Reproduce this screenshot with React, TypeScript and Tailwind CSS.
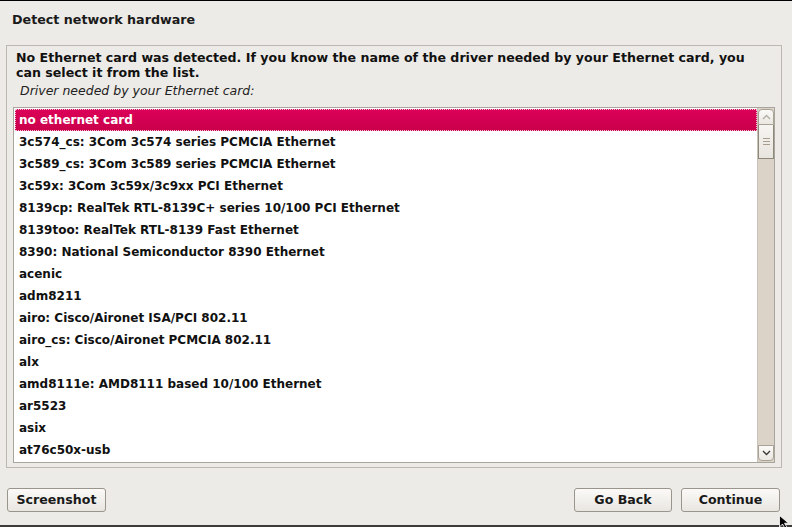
const FONT = '"DejaVu Sans", "Liberation Sans", sans-serif'

const drivers = [
  'no ethernet card',
  '3c574_cs: 3Com 3c574 series PCMCIA Ethernet',
  '3c589_cs: 3Com 3c589 series PCMCIA Ethernet',
  '3c59x: 3Com 3c59x/3c9xx PCI Ethernet',
  '8139cp: RealTek RTL-8139C+ series 10/100 PCI Ethernet',
  '8139too: RealTek RTL-8139 Fast Ethernet',
  '8390: National Semiconductor 8390 Ethernet',
  'acenic',
  'adm8211',
  'airo: Cisco/Aironet ISA/PCI 802.11',
  'airo_cs: Cisco/Aironet PCMCIA 802.11',
  'alx',
  'amd8111e: AMD8111 based 10/100 Ethernet',
  'ar5523',
  'asix',
  'at76c50x-usb',
]

function Btn({ label, className }: { label: string; className: string }) {
  return (
    <button
      type="button"
      className={`h-[24px] rounded-[3px] border border-[#9a958c] bg-gradient-to-b from-[#fbfaf8] to-[#e9e6e1] text-[12.6px] font-bold text-[#1a1a1a] ${className}`}
    >
      {label}
    </button>
  )
}

export default function App() {
  return (
    <div
      className="w-[792px] h-[527px] bg-[#edebe7] border-t border-black flex flex-col relative overflow-hidden"
      style={{ fontFamily: FONT }}
    >
      {/* Title */}
      <div className="h-[44px] pl-[12px] pt-[9px] text-[12.7px] font-bold text-[#1a1a1a]">
        Detect network hardware
      </div>

      {/* Main panel */}
      <div className="ml-[6px] mr-[10px] h-[423px] border border-[#bcb8b0] flex flex-col">
        <p className="pl-[9px] pt-[4px] pr-[8px] text-[12.6px] font-bold leading-[15px] text-[#111]">
          No Ethernet card was detected. If you know the name of the driver needed by your Ethernet card, you
          <br />
          can select it from the list.
        </p>
        <p className="pl-[13px] pt-[3px] text-[12.5px] italic leading-[16px] text-[#222]">
          Driver needed by your Ethernet card:
        </p>

        {/* List box */}
        <div className="mt-[8px] ml-[6px] mr-[6px] h-[356px] border border-[#a9a59c] bg-white flex">
          <div className="flex-1 flex flex-col pt-[1px] pl-[1px]">
            {drivers.map((d, i) => (
              <div
                key={d}
                className={
                  i === 0
                    ? 'h-[22px] flex items-center pl-[4px] text-[12px] font-bold text-white bg-gradient-to-b from-[#dc0058] to-[#c9004b] outline-1 outline-dotted outline-offset-[-1px] outline-[#f5c0d4]'
                    : 'h-[22px] flex items-center pl-[4px] text-[12px] font-bold text-[#111]'
                }
              >
                {d}
              </div>
            ))}
          </div>

          {/* Scrollbar */}
          <div className="w-[17px] bg-[#dcd3c8] border-l border-[#c9c2b7] flex flex-col">
            <div className="h-[16px] mt-[1px] rounded-t-[4px] border border-[#a8a196] bg-gradient-to-b from-[#fbfaf8] to-[#ebe7e1] flex items-center justify-center">
              <svg width="9" height="6" viewBox="0 0 9 6">
                <path d="M1 5 L4.5 1.5 L8 5" fill="none" stroke="#b3aea6" strokeWidth="1.4" />
              </svg>
            </div>
            <div className="h-[34px] border border-t-0 border-[#8e877c] bg-gradient-to-b from-[#f7f5f2] to-[#e8e4de] flex flex-col items-center justify-center gap-[2px]">
              <div className="w-[7px] h-px bg-[#a89e90]" />
              <div className="w-[7px] h-px bg-[#a89e90]" />
              <div className="w-[7px] h-px bg-[#a89e90]" />
            </div>
            <div className="flex-1" />
            <div className="h-[16px] mb-[1px] rounded-b-[4px] border border-[#a8a196] bg-gradient-to-b from-[#fbfaf8] to-[#ebe7e1] flex items-center justify-center">
              <svg width="9" height="6" viewBox="0 0 9 6">
                <path d="M1 1 L4.5 4.5 L8 1" fill="none" stroke="#3a3a3a" strokeWidth="1.4" />
              </svg>
            </div>
          </div>
        </div>
      </div>

      {/* Buttons */}
      <div className="flex items-center mt-[20px] pl-[7px] pr-[12px]">
        <Btn label="Screenshot" className="w-[99px]" />
        <div className="flex-1" />
        <Btn label="Go Back" className="w-[98px]" />
        <Btn label="Continue" className="w-[99px] ml-[9px]" />
      </div>

      {/* bottom edge */}
      <div className="absolute left-0 right-0 bottom-0 h-[2px] bg-[#3c3b39]" />

      {/* mouse cursor */}
      <svg className="absolute left-[779px] top-[514px]" width="12" height="14" viewBox="0 0 12 14">
        <path d="M0.5 0.5 L0.5 12 L3.5 9 L6 13.5 L8 12.5 L5.5 8.2 L9.5 8.2 Z" fill="#000" stroke="#fff" strokeWidth="0.8" />
      </svg>
    </div>
  )
}
